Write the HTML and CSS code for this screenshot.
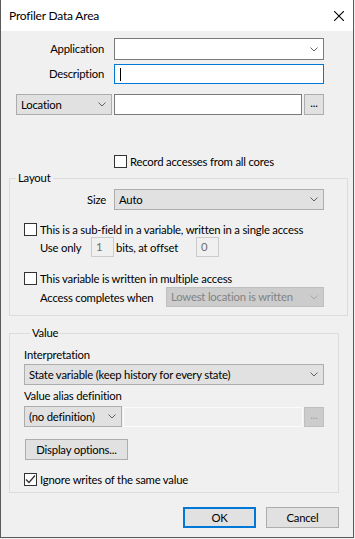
FILE: index.html
```html
<html>
  <head>
    <link rel="stylesheet" href="styles.css">
  </head>
  <body>
    <div class="window">
      <div class="titlebar">
        <span class="title">Profiler Data Area</span>
        <svg class="close" width="10" height="10" viewBox="0 0 10 10"><path d="M0 0L10 10M10 0L0 10" stroke="#000" stroke-width="1.1" fill="none"/></svg>
      </div>

      <div class="content">
        <div class="row row-app">
          <span class="label label-top">Application</span>
          <div class="combo combo-edit w-wide">
            <span></span>
            <svg class="chevron" width="8" height="5" viewBox="0 0 8 5"><polyline points="0.5,0.5 4,4 7.5,0.5" fill="none" stroke="#606060"/></svg>
          </div>
        </div>

        <div class="row row-desc">
          <span class="label label-top">Description</span>
          <div class="textbox focused w-wide"><span class="caret"></span></div>
        </div>

        <div class="row row-loc">
          <div class="combo w-loc">
            <span>Location</span>
            <svg class="chevron" width="8" height="5" viewBox="0 0 8 5"><polyline points="0.5,0.5 4,4 7.5,0.5" fill="none" stroke="#606060"/></svg>
          </div>
          <div class="textbox w-locinput"></div>
          <div class="button dots">...</div>
        </div>

        <div class="check-row row-record">
          <span class="check"></span>
          <span>Record accesses from all cores</span>
        </div>

        <div class="group group-layout">
          <div class="group-title">Layout</div>

          <div class="row row-size">
            <span class="label label-size">Size</span>
            <div class="combo w-wide">
              <span>Auto</span>
              <svg class="chevron" width="8" height="5" viewBox="0 0 8 5"><polyline points="0.5,0.5 4,4 7.5,0.5" fill="none" stroke="#606060"/></svg>
            </div>
          </div>

          <div class="check-row row-sub">
            <span class="check"></span>
            <span>This is a sub-field in a variable, written in a single access</span>
          </div>

          <div class="row row-bits">
            <span class="label-useonly">Use only</span>
            <div class="textbox disabled w-small">1</div>
            <span class="label-offset">bits, at offset</span>
            <div class="textbox disabled w-small">0</div>
          </div>

          <div class="check-row row-multi">
            <span class="check"></span>
            <span>This variable is written in multiple access</span>
          </div>

          <div class="row row-access">
            <span class="label-access">Access completes when</span>
            <div class="combo combo-disabled w-access">
              <span>Lowest location is written</span>
              <svg class="chevron" width="8" height="5" viewBox="0 0 8 5"><polyline points="0.5,0.5 4,4 7.5,0.5" fill="none" stroke="#a6a6a6"/></svg>
            </div>
          </div>
        </div>

        <div class="group group-value">
          <div class="group-title">Value</div>

          <div class="field-label label-interp">Interpretation</div>
          <div class="combo w-interp">
            <span>State variable (keep history for every state)</span>
            <svg class="chevron" width="8" height="5" viewBox="0 0 8 5"><polyline points="0.5,0.5 4,4 7.5,0.5" fill="none" stroke="#606060"/></svg>
          </div>

          <div class="field-label label-alias">Value alias definition</div>
          <div class="row row-alias">
            <div class="combo w-alias">
              <span>(no definition)</span>
              <svg class="chevron" width="8" height="5" viewBox="0 0 8 5"><polyline points="0.5,0.5 4,4 7.5,0.5" fill="none" stroke="#606060"/></svg>
            </div>
            <div class="textbox alias-disabled w-aliasinput"></div>
            <div class="button dots dots-disabled">...</div>
          </div>

          <div class="button display-button">Display options...</div>

          <div class="check-row row-ignore">
            <span class="check">
              <svg width="11" height="11" viewBox="0 0 11 11"><polyline points="1,5.5 4,8.5 10,1.5" fill="none" stroke="#333" stroke-width="1.3"/></svg>
            </span>
            <span>Ignore writes of the same value</span>
          </div>
        </div>

        <div class="footer">
          <div class="button ok-button">OK</div>
          <div class="button">Cancel</div>
        </div>
      </div>
    </div>
  </body>
</html>
```

FILE: styles.css
```css
body {
  margin: 0;
  background-color: #f0f0f0;
  font-family: Lato, 'Noto Sans', sans-serif;
  font-size: 11.3px;
  letter-spacing: -0.2px;
  color: #000;
}
.window {
  width: 354px;
  height: 538px;
  box-sizing: border-box;
  border: 1px solid #5a5a5a;
  border-top: none;
  background-color: #f0f0f0;
}
.titlebar {
  height: 31px;
  background-color: #fff;
  display: flex;
  align-items: center;
  justify-content: space-between;
  padding: 0 9px 0 8px;
}
.title {
  line-height: 16px;
  font-size: 12px;
}
.close {
  display: block;
}
.content {
  padding-top: 7px;
  white-space: nowrap;
}

/* generic rows */
.row {
  display: flex;
  align-items: center;
}
.label {
  text-align: right;
  line-height: 16px;
}
.label-top {
  width: 103px;
  margin-right: 10px;
}

/* controls */
.combo, .textbox, .button {
  box-sizing: border-box;
  height: 21px;
  line-height: 16px;
}
.combo {
  display: flex;
  align-items: center;
  justify-content: space-between;
  padding: 0 5px 0 4px;
  background-color: #e1e1e1;
  border: 1px solid #adadad;
}
.combo-edit {
  background-color: #fff;
  border-color: #7a7a7a;
  height: 22px;
}
.combo-disabled {
  background-color: #cccccc;
  border-color: #bfbfbf;
  color: #838383;
  height: 20px;
}
.chevron {
  display: block;
  flex: none;
}
.textbox {
  background-color: #fff;
  border: 1px solid #7a7a7a;
  padding: 0 4px;
  display: flex;
  align-items: center;
}
.focused {
  border-color: #0078d7;
  height: 20px;
}
.caret {
  width: 1px;
  height: 13px;
  background-color: #000;
  margin-left: 1px;
}
.disabled {
  background-color: #f0f0f0;
  border-color: #cccccc;
  color: #6d6d6d;
  height: 20px;
}
.button {
  background-color: #e1e1e1;
  border: 1px solid #adadad;
  display: flex;
  align-items: center;
  justify-content: center;
}
.dots {
  width: 20px;
  padding-bottom: 3px;
}
.dots-disabled {
  background-color: #cccccc;
  border-color: #bfbfbf;
  color: #a09ea8;
  height: 20px;
}

/* widths */
.w-wide { width: 210px; }
.w-loc { width: 96px; margin-right: 2px; }
.w-locinput { width: 188px; margin-right: 2px; }
.w-small { width: 23px; }
.w-access { width: 158px; }
.w-interp { width: 300px; }
.w-alias { width: 98px; margin-right: 1px; }
.w-aliasinput { width: 180px; margin-right: 1px; height: 20px; }

/* checkboxes */
.check-row {
  display: flex;
  align-items: center;
  height: 15px;
  line-height: 16px;
}
.check {
  width: 13px;
  height: 13px;
  box-sizing: border-box;
  border: 1px solid #333;
  background-color: #fff;
  margin-right: 3px;
  display: flex;
  align-items: center;
  justify-content: center;
  flex: none;
}

/* top section */
.row-desc { margin-top: 4px; }
.row-loc { margin-top: 10px; margin-left: 15px; }
.row-record { margin-top: 39px; margin-left: 113px; }

/* group boxes */
.group {
  border: 1px solid #dcdcdc;
  margin-left: 8px;
}
.group-title {
  width: fit-content;
  margin: -9px 0 0 6px;
  padding: 0 2px;
  line-height: 16px;
  background-color: #f0f0f0;
}
.group-layout {
  width: 339px;
  box-sizing: border-box;
  margin-top: 9px;
  padding-bottom: 8px;
}
.row-size { margin-top: 3px; }
.label-size { width: 96px; margin-right: 8px; }
.row-sub { margin-top: 12px; margin-left: 14px; }
.row-bits { margin-left: 30px; }
.label-useonly { width: 51px; }
.label-offset { width: 80px; margin-left: 2px; }
.row-multi { margin-top: 14px; margin-left: 14px; }
.row-access { margin-top: 1px; margin-left: 30px; }
.label-access { width: 126px; }

.group-value {
  width: 330px;
  box-sizing: border-box;
  margin-top: 17px;
  padding: 0 0 5px 14px;
}
.field-label {
  line-height: 16px;
}
.label-interp { margin-top: 6px; margin-bottom: 1px; }
.label-alias { margin-top: 3px; margin-bottom: 2px; }
.alias-disabled {
  background-color: #f0f0f0;
  border-color: #fbfbfb;
}
.display-button {
  width: 103px;
  margin: 12px 0 0 1px;
}
.row-ignore { margin-top: 12px; }

/* dialog buttons */
.footer {
  display: flex;
  justify-content: flex-end;
  gap: 10px;
  padding-right: 14px;
  margin-top: 14px;
}
.footer .button {
  width: 73px;
}
.ok-button {
  border: 2px solid #0078d7;
}
```
